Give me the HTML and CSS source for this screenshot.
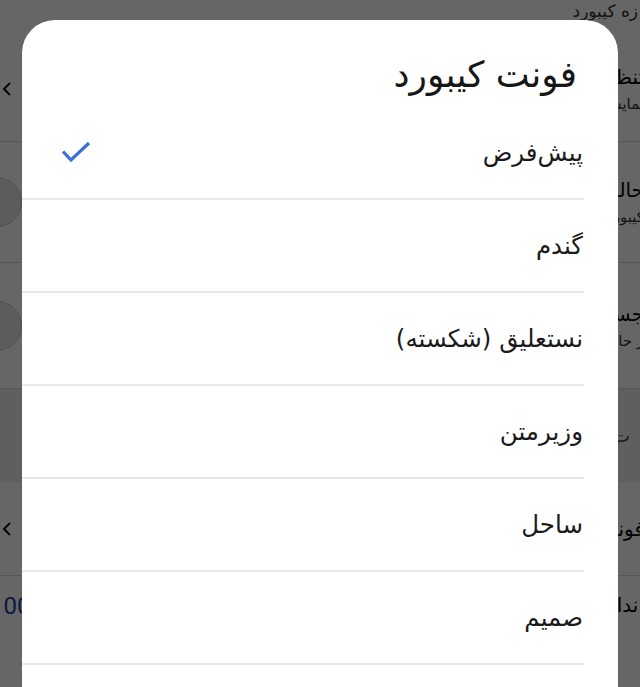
FILE: index.html
```html
<!DOCTYPE html>
<html lang="fa">
<head>
<meta charset="utf-8">
<title>فونت کیبورد</title>
<link rel="stylesheet" href="styles.css">
</head>
<body>
<div class="screen">
  <div class="page" dir="rtl">
    <div class="bg-top"><span class="bg-sub">زه کیبورد</span></div>
    <div class="bg-row r1">
      <div class="bg-text"><div class="bg-title">تنظیمات</div><div class="bg-sub">نمایش</div></div>
      <svg class="bg-chev" width="10" height="16" viewBox="0 0 10 16"><polyline points="8,2 2,8 8,14" fill="none" stroke="#000" stroke-width="1.8"/></svg>
    </div>
    <div class="bg-row r2">
      <div class="bg-text"><div class="bg-title">حالت</div><div class="bg-sub">کیبورد</div></div>
      <span class="bg-thumb"></span>
    </div>
    <div class="bg-row r3">
      <div class="bg-text"><div class="bg-title">جستجو</div><div class="bg-sub">ر حالت</div></div>
      <span class="bg-thumb"></span>
    </div>
    <div class="bg-section"><span class="bg-head">ت</span></div>
    <div class="bg-row r4">
      <div class="bg-text"><div class="bg-title">فونت</div></div>
      <svg class="bg-chev" width="10" height="16" viewBox="0 0 10 16"><polyline points="8,2 2,8 8,14" fill="none" stroke="#000" stroke-width="1.8"/></svg>
    </div>
    <div class="bg-row r5">
      <div class="bg-text"><div class="bg-title">اندازه</div></div>
      <span class="bg-val">100</span>
      <span class="bg-dot"></span>
    </div>
  </div>
  <div class="scrim"></div>
  <div class="sheet" dir="rtl">
    <div class="sheet-title">فونت کیبورد</div>
    <ul class="options">
      <li class="option selected">
        <span class="label">پیش&zwnj;فرض</span>
        <svg class="check" width="32" height="24" viewBox="0 0 32 24"><polyline points="3,10.5 11,19 29,2" fill="none" stroke="#3d70d6" stroke-width="3.2" stroke-linejoin="miter"/></svg>
      </li>
      <li class="option"><span class="label">گندم</span></li>
      <li class="option"><span class="label">نستعلیق (شکسته)</span></li>
      <li class="option"><span class="label">وزیرمتن</span></li>
      <li class="option"><span class="label">ساحل</span></li>
      <li class="option"><span class="label">صمیم</span></li>
      <li class="option"><span class="label">شبنم</span></li>
    </ul>
  </div>
</div>
</body>
</html>
```

FILE: styles.css
```css
html, body {
  margin: 0;
  padding: 0;
}
body {
  width: 640px;
  height: 687px;
  overflow: hidden;
  font-family: "DejaVu Sans", "Noto Sans", sans-serif;
}
.screen {
  position: relative;
  width: 640px;
  height: 687px;
  overflow: hidden;
  background: #fff;
}
.page {
  display: flex;
  flex-direction: column;
  color: #000;
}
.bg-top {
  height: 36px;
  padding-right: 2px;
  line-height: 20px;
}
.bg-top .bg-sub {
  font-size: 17px;
  position: relative;
  top: -1px;
}
.bg-row {
  display: flex;
  align-items: center;
  justify-content: space-between;
  padding: 0 0 0 2px;
  border-bottom: 1px solid #d8d8d8;
  position: relative;
}
.bg-text {
  display: flex;
  flex-direction: column;
  margin-right: -4px;
}
.bg-title {
  font-size: 20px;
  line-height: 30px;
}
.bg-sub {
  font-size: 15px;
  line-height: 24px;
  color: #333;
}
.r1 { height: 105px; }
.r2 { height: 120px; }
.r3 { height: 125px; }
.r4 { height: 93px; }
.r5 { height: 110px; align-items: flex-start; padding-top: 14px; }
.bg-section {
  height: 93px;
  background: #eeeeee;
  display: flex;
  align-items: center;
  padding-right: 10px;
}
.bg-head {
  font-size: 18px;
  color: #444;
}
.bg-thumb {
  width: 48px;
  height: 48px;
  border-radius: 50%;
  background: #e6e6e6;
  border: 1px solid #c9c9c9;
  margin-left: -30px;
}
.bg-val {
  font-family: "Roboto", sans-serif;
  font-size: 24px;
  color: #1b3fa8;
  margin-left: -12px;
  margin-top: 2px;
}
.bg-dot {
  position: absolute;
  right: 14px;
  bottom: 2px;
  width: 10px;
  height: 10px;
  border-radius: 50%;
  background: #2f62d0;
}
.scrim {
  position: absolute;
  inset: 0;
  background: rgba(0, 0, 0, 0.6);
}
.sheet {
  position: absolute;
  left: 22px;
  top: 20px;
  width: 596px;
  height: 720px;
  background: #fff;
  border-radius: 33px 33px 0 0;
}
.sheet-title {
  height: 87px;
  box-sizing: border-box;
  padding: 33px 41px 0 0;
  font-size: 36px;
  line-height: 44px;
  color: #161616;
}
.options {
  list-style: none;
  margin: 0;
  padding: 0;
}
.option {
  height: 91px;
  margin-right: 34px;
  padding: 0 1px 0 38px;
  border-bottom: 2px solid #e8e8e8;
  display: flex;
  align-items: center;
  justify-content: space-between;
  font-size: 24.5px;
  color: #1a1a1a;
}
.check {
  display: block;
}
```
